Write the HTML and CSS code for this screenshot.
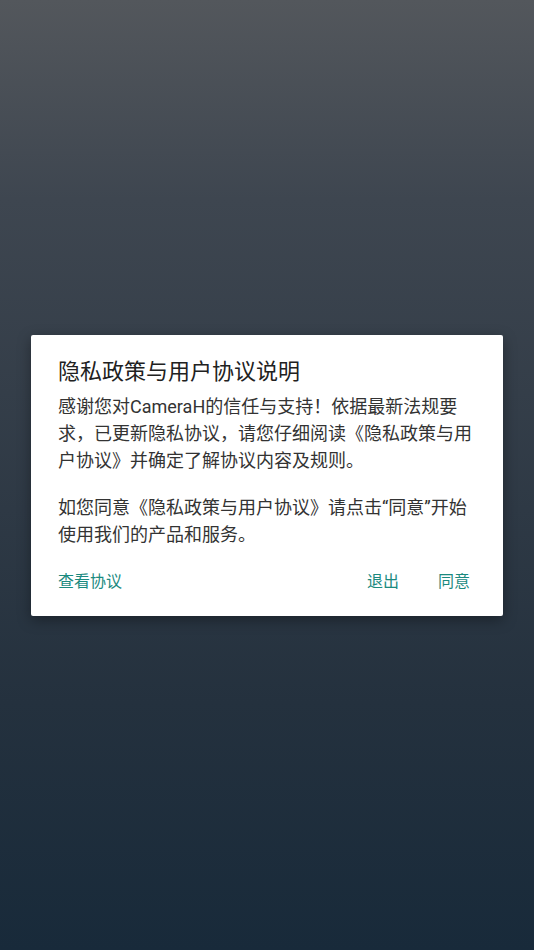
FILE: index.html
```html
<!DOCTYPE html>
<html lang="zh-CN">
<head>
<meta charset="utf-8">
<title>隐私政策与用户协议说明</title>
<link rel="stylesheet" href="styles.css">
</head>
<body>
<div class="screen">
  <div class="dialog">
    <h1 class="title">隐私政策与用户协议说明</h1>
    <p class="text">感谢您对CameraH的信任与支持！依据最新法规要求，已更新隐私协议，请您仔细阅读《隐私政策与用户协议》并确定了解协议内容及规则。</p>
    <p class="text second">如您同意《隐私政策与用户协议》请点击“同意”开始使用我们的产品和服务。</p>
    <div class="actions">
      <span class="btn">查看协议</span>
      <span class="spacer"></span>
      <span class="btn">退出</span>
      <span class="btn">同意</span>
    </div>
  </div>
</div>
</body>
</html>
```

FILE: styles.css
```css
html, body {
  margin: 0;
  padding: 0;
  height: 100%;
}
body {
  font-family: Roboto, "Noto Sans CJK SC", "Noto Sans", sans-serif;
}
.screen {
  height: 950px;
  background: linear-gradient(to bottom, #53575c 0%, #3e4650 21%, #24313e 74%, #182a3a 100%);
  display: flex;
  flex-direction: column;
  align-items: center;
  padding-top: 335px;
  box-sizing: border-box;
}
.dialog {
  width: 472px;
  background: #ffffff;
  border-radius: 2px;
  box-shadow: 0 4px 14px rgba(0, 0, 0, 0.35);
  padding: 22px 27px 16px 27px;
  box-sizing: border-box;
}
.title {
  margin: 0;
  font-size: 22px;
  line-height: 30px;
  font-weight: 400;
  color: #212121;
}
.text {
  margin: 6px 0 0 0;
  font-size: 18px;
  line-height: 27px;
  color: #333333;
}
.text.second {
  margin-top: 20px;
}
.actions {
  display: flex;
  align-items: center;
  height: 36px;
  margin-top: 16px;
  padding-right: 6px;
  gap: 39px;
}
.spacer {
  flex: 1;
}
.btn {
  font-size: 16px;
  color: #1b8a7f;
  line-height: 36px;
}
```
